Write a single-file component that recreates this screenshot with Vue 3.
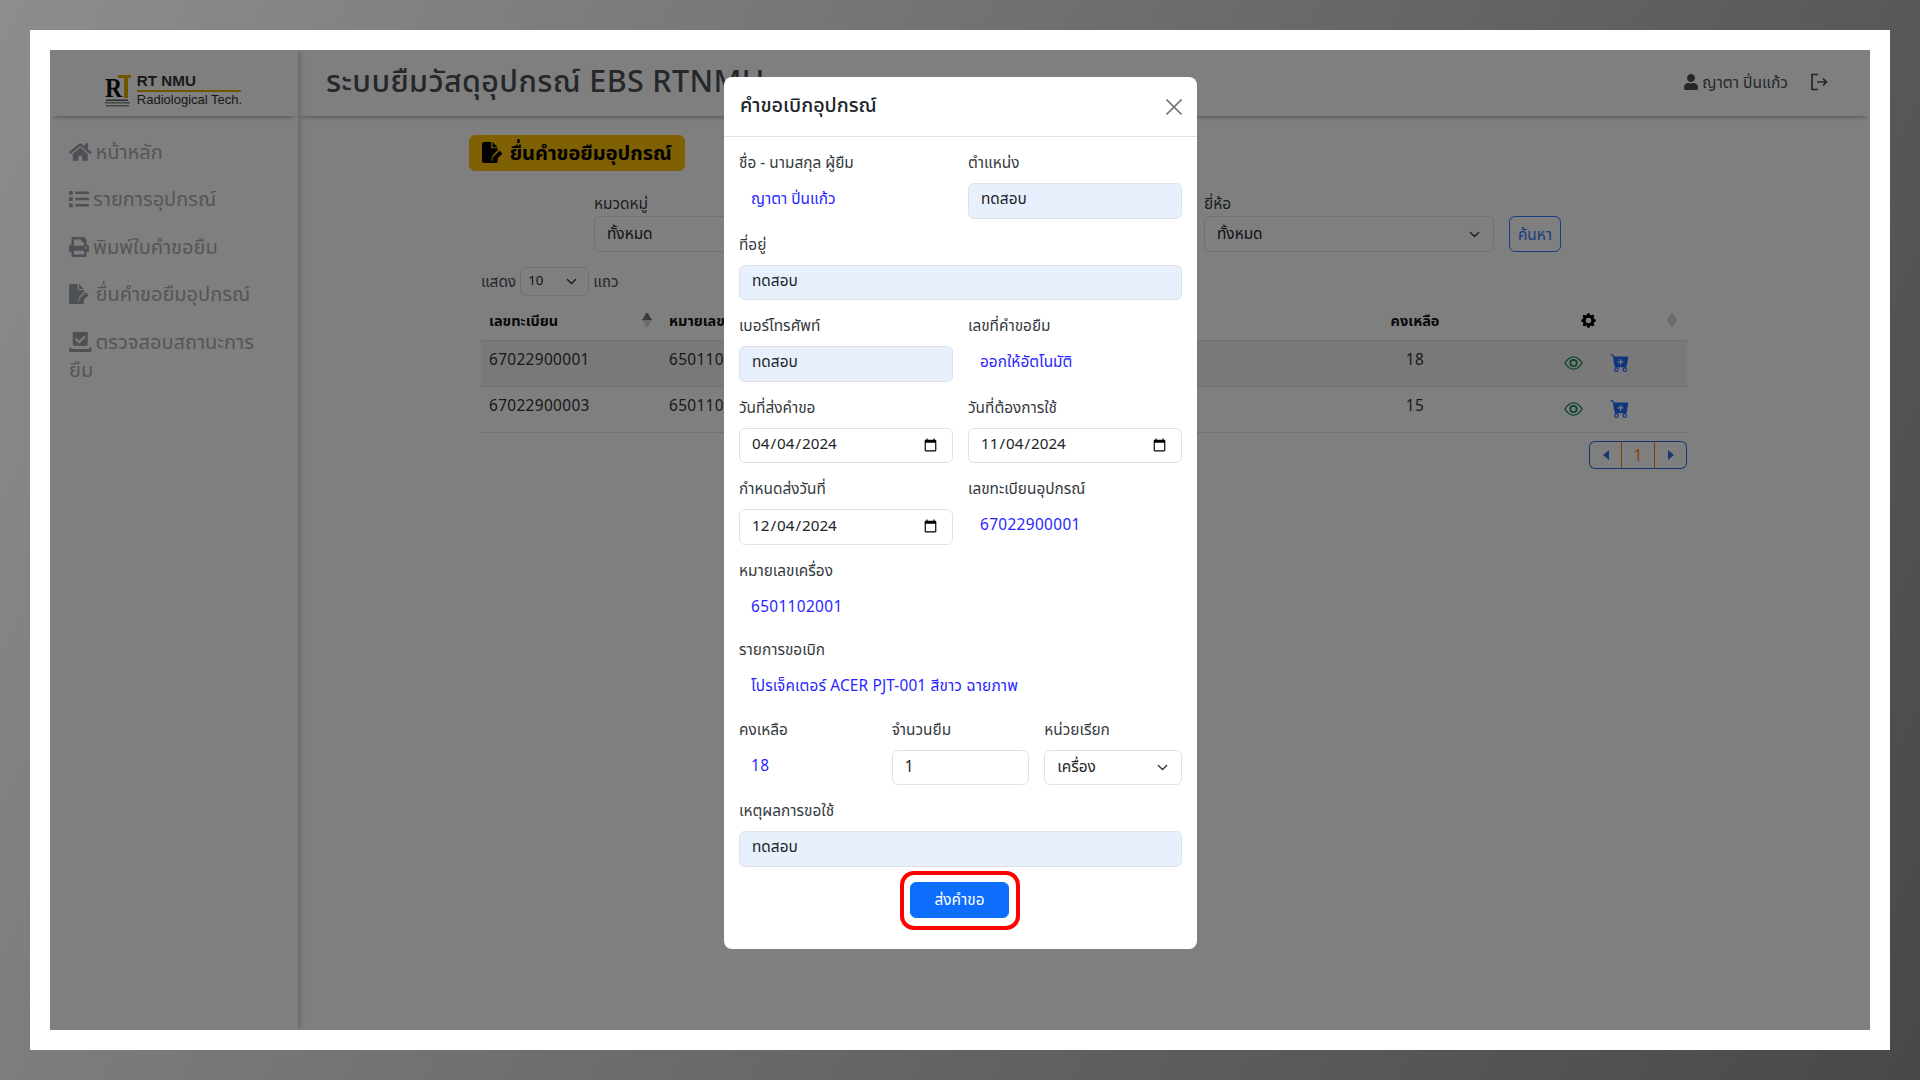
<script setup>
const navItems = [
  { key: "home", label: "หน้าหลัก", view: "0 0 576 512", d: "M280.37 148.26L96 300.11V464a16 16 0 0 0 16 16l112.06-.29a16 16 0 0 0 15.92-16V368a16 16 0 0 1 16-16h64a16 16 0 0 1 16 16v95.64a16 16 0 0 0 16 16.05L464 480a16 16 0 0 0 16-16V300L295.67 148.26a12.19 12.19 0 0 0-15.3 0zM571.6 251.47L488 182.56V44.05a12 12 0 0 0-12-12h-56a12 12 0 0 0-12 12v72.61L318.47 43a48 48 0 0 0-61 0L4.34 251.47a12 12 0 0 0-1.6 16.9l25.5 31A12 12 0 0 0 45.15 301l235.22-193.74a12.19 12.19 0 0 1 15.3 0L530.9 301a12 12 0 0 0 16.9-1.6l25.5-31a12 12 0 0 0-1.7-16.93z" },
  { key: "list", label: "รายการอุปกรณ์", view: "0 0 512 512", d: "M80 368H16a16 16 0 0 0-16 16v64a16 16 0 0 0 16 16h64a16 16 0 0 0 16-16v-64a16 16 0 0 0-16-16zm0-320H16A16 16 0 0 0 0 64v64a16 16 0 0 0 16 16h64a16 16 0 0 0 16-16V64a16 16 0 0 0-16-16zm0 160H16a16 16 0 0 0-16 16v64a16 16 0 0 0 16 16h64a16 16 0 0 0 16-16v-64a16 16 0 0 0-16-16zm416 176H176a16 16 0 0 0-16 16v32a16 16 0 0 0 16 16h320a16 16 0 0 0 16-16v-32a16 16 0 0 0-16-16zm0-320H176a16 16 0 0 0-16 16v32a16 16 0 0 0 16 16h320a16 16 0 0 0 16-16V80a16 16 0 0 0-16-16zm0 160H176a16 16 0 0 0-16 16v32a16 16 0 0 0 16 16h320a16 16 0 0 0 16-16v-32a16 16 0 0 0-16-16z" },
  { key: "print", label: "พิมพ์ใบคำขอยืม", view: "0 0 512 512", d: "M448 192V77.25c0-8.49-3.37-16.62-9.37-22.63L393.37 9.37c-6-6-14.14-9.37-22.63-9.37H96C78.33 0 64 14.33 64 32v160c-35.35 0-64 28.65-64 64v112c0 8.84 7.16 16 16 16h48v96c0 17.67 14.33 32 32 32h320c17.67 0 32-14.33 32-32v-96h48c8.84 0 16-7.16 16-16V256c0-35.35-28.65-64-64-64zm-64 256H128v-96h256v96zm0-224H128V64h192v48c0 8.84 7.16 16 16 16h48v96zm48 72c-13.25 0-24-10.75-24-24 0-13.26 10.75-24 24-24s24 10.74 24 24c0 13.25-10.75 24-24 24z" },
  { key: "file", label: "ยื่นคำขอยืมอุปกรณ์", view: "0 0 576 512", d: "M0 48A48 48 0 0 1 48 0h176v128a24 24 0 0 0 24 24h136v50L262 324l-34 112a20 20 0 0 0 26 24l80-24 50-50v78a48 48 0 0 1-48 48H48a48 48 0 0 1-48-48zM256 0l128 128H256zM428 214l72 72-170 150-84 22 22-84z" },
  { key: "check", label: "ตรวจสอบสถานะการยืม", view: "0 0 576 512", d: "M96 0a48 48 0 0 1 48-48h288a48 48 0 0 1 48 48v304a48 48 0 0 1-48 48H144a48 48 0 0 1-48-48zM392 90l-134 134-70-70-36 36 106 106 170-170zM0 400h64v32h448v-32h64v64a48 48 0 0 1-48 48H48a48 48 0 0 1-48-48z" }
];

const rows = [
  { code: "67022900001", machine: "6501102001", left: 18 },
  { code: "67022900003", machine: "6501102003", left: 15 }
];

const cartPath = "M.5 1a.5.5 0 0 0 0 1h1.11l.401 1.607 1.498 7.985A.5.5 0 0 0 4 12h1a2 2 0 1 0 0 4 2 2 0 0 0 0-4h7a2 2 0 1 0 0 4 2 2 0 0 0 0-4h1a.5.5 0 0 0 .491-.408l1.5-8A.5.5 0 0 0 14.5 3H2.89l-.405-1.621A.5.5 0 0 0 2 1H.5zM6 14a1 1 0 1 1-2 0 1 1 0 0 1 2 0zm7 0a1 1 0 1 1-2 0 1 1 0 0 1 2 0zM9 5.5V7h1.5a.5.5 0 0 1 0 1H9v1.5a.5.5 0 0 1-1 0V8H6.5a.5.5 0 0 1 0-1H8V5.5a.5.5 0 0 1 1 0z";
</script>

<template>
  <div class="screen">
    <div class="frame">
      <div class="app">
        <aside class="sidebar">
          <div class="brand">
            <svg class="brand__mark" viewBox="0 0 26 34">
              <rect x="13" y="1" width="13" height="3" fill="#e0a800" />
              <rect x="19" y="1" width="4" height="23" fill="#e0a800" />
              <text transform="translate(0 23) scale(0.85 1)" font-family="Liberation Serif, serif" font-size="28" font-weight="700" fill="#111">R</text>
              <rect x="1" y="25.500" width="22" height="1.500" fill="#555" />
              <rect x="0" y="28" width="25" height="1.500" fill="#888" />
              <rect x="1" y="31" width="23" height="1.500" fill="#888" />
            </svg>
            <div class="brand__text">
              <div class="brand__name">RT NMU</div>
              <div class="brand__sub">Radiological Tech.</div>
            </div>
          </div>
          <nav class="nav">
            <a v-for="item in navItems" :key="item.key" class="nav__item">
              <svg class="nav__icon" :viewBox="item.view" fill="currentColor"><path :d="item.d" /></svg>{{ item.label }}
            </a>
          </nav>
        </aside>

        <main class="main">
          <header class="topbar">
            <h1 class="topbar__title">ระบบยืมวัสดุอุปกรณ์ EBS RTNMU</h1>
            <div class="topbar__user">
              <svg class="topbar__avatar" viewBox="0 0 448 512" fill="currentColor">
                <path d="M224 256c70.7 0 128-57.3 128-128S294.7 0 224 0 96 57.3 96 128s57.3 128 128 128zm89.6 32h-16.7c-22.2 10.2-46.9 16-72.9 16s-50.6-5.8-72.9-16h-16.7C60.2 288 0 348.2 0 422.4V464c0 26.5 21.5 48 48 48h352c26.5 0 48-21.5 48-48v-41.6c0-74.2-60.2-134.4-134.4-134.4z" />
              </svg>
              <span>ญาตา ปิ่นแก้ว</span>
              <svg class="topbar__logout" viewBox="0 0 18 18" fill="none" stroke="currentColor" stroke-width="1.7">
                <path d="M8 1.500H2v15h6M7 9h9.500M13 5.500 16.500 9 13 12.500" />
              </svg>
            </div>
          </header>

          <section class="content">
            <button class="request-btn" type="button">
              <svg class="request-btn__icon" viewBox="0 0 576 512" fill="currentColor"><path :d="navItems[3].d" /></svg>
              ยื่นคำขอยืมอุปกรณ์
            </button>

            <div class="filters">
              <div class="filters__field">
                <label>หมวดหมู่</label>
                <select class="select"><option>ทั้งหมด</option></select>
              </div>
              <div class="filters__field">
                <label>&nbsp;</label>
                <select class="select"></select>
              </div>
              <div class="filters__field">
                <label>ยี่ห้อ</label>
                <select class="select"><option>ทั้งหมด</option></select>
              </div>
              <button class="search-btn" type="button">ค้นหา</button>
            </div>

            <div class="length">
              <span>แสดง</span>
              <select class="select select--small"><option>10</option></select>
              <span>แถว</span>
            </div>

            <table class="table">
              <colgroup>
                <col style="width: 180px" />
                <col style="width: 150px" />
                <col />
                <col style="width: 150px" />
                <col style="width: 197px" />
              </colgroup>
              <thead>
                <tr>
                  <th class="sortable">เลขทะเบียน<span class="sort sort--asc"></span></th>
                  <th>หมายเลขเครื่อง</th>
                  <th></th>
                  <th class="center">คงเหลือ</th>
                  <th class="center sortable">
                    <svg class="gear" viewBox="0 0 16 16" fill="currentColor">
                      <path d="M9.405 1.05c-.413-1.4-2.397-1.4-2.81 0l-.1.34a1.464 1.464 0 0 1-2.105.872l-.31-.17c-1.283-.698-2.686.705-1.987 1.987l.169.311c.446.82.023 1.841-.872 2.105l-.34.1c-1.4.413-1.4 2.397 0 2.81l.34.1a1.464 1.464 0 0 1 .872 2.105l-.17.31c-.698 1.283.705 2.686 1.987 1.987l.311-.169a1.464 1.464 0 0 1 2.105.872l.1.34c.413 1.4 2.397 1.4 2.81 0l.1-.34a1.464 1.464 0 0 1 2.105-.872l.31.17c1.283.698 2.686-.705 1.987-1.987l-.169-.311a1.464 1.464 0 0 1 .872-2.105l.34-.1c1.4-.413 1.4-2.397 0-2.81l-.34-.1a1.464 1.464 0 0 1-.872-2.105l.17-.31c.698-1.283-.705-2.686-1.987-1.987l-.311.169a1.464 1.464 0 0 1-2.105-.872l-.1-.34zM8 10.93a2.929 2.929 0 1 1 0-5.86 2.929 2.929 0 0 1 0 5.858z" />
                    </svg>
                    <span class="sort"></span>
                  </th>
                </tr>
              </thead>
              <tbody>
                <tr v-for="row in rows" :key="row.code">
                  <td class="num">{{ row.code }}</td>
                  <td class="num">{{ row.machine }}</td>
                  <td></td>
                  <td class="center num">{{ row.left }}</td>
                  <td class="actions">
                    <svg class="eye" viewBox="0 0 20 16" fill="none" stroke="currentColor" stroke-width="1.4">
                      <path d="M1 8c2.500-4.300 5.500-6.500 9-6.500S16.500 3.700 19 8c-2.500 4.300-5.500 6.500-9 6.500S3.500 12.300 1 8z" />
                      <circle cx="10" cy="8" r="3.400" stroke-width="1.800" />
                    </svg>
                    <svg class="cart" viewBox="0 0 16 16" fill="currentColor"><path :d="cartPath" /></svg>
                  </td>
                </tr>
              </tbody>
            </table>

            <div class="pager">
              <span class="pager__cell pager__cell--arrow"><i class="tri tri--left"></i></span>
              <span class="pager__cell pager__cell--page">1</span>
              <span class="pager__cell pager__cell--arrow"><i class="tri tri--right"></i></span>
            </div>
          </section>
        </main>

        <div class="backdrop"></div>

        <div class="modal" role="dialog" aria-modal="true">
          <div class="modal__header">
            <h2 class="modal__title">คำขอเบิกอุปกรณ์</h2>
            <svg class="modal__close" viewBox="0 0 16 16" fill="none" stroke="currentColor" stroke-width="1.600">
              <path d="M.5.500l15 15M15.500.500l-15 15" />
            </svg>
          </div>

          <form class="modal__body" @submit.prevent>
            <div class="row row--2">
              <div class="field">
                <label>ชื่อ - นามสกุล ผู้ยืม</label>
                <div class="value">ญาตา ปิ่นแก้ว</div>
              </div>
              <div class="field">
                <label>ตำแหน่ง</label>
                <input class="input input--filled" value="ทดสอบ" />
              </div>
            </div>
            <div class="field">
              <label>ที่อยู่</label>
              <input class="input input--filled" value="ทดสอบ" />
            </div>
            <div class="row row--2">
              <div class="field">
                <label>เบอร์โทรศัพท์</label>
                <input class="input input--filled" value="ทดสอบ" />
              </div>
              <div class="field">
                <label>เลขที่คำขอยืม</label>
                <div class="value">ออกให้อัตโนมัติ</div>
              </div>
            </div>
            <div class="row row--2">
              <div class="field">
                <label>วันที่ส่งคำขอ</label>
                <input class="input input--date" type="date" value="2024-04-04" />
              </div>
              <div class="field">
                <label>วันที่ต้องการใช้</label>
                <input class="input input--date" type="date" value="2024-11-04" />
              </div>
            </div>
            <div class="row row--2">
              <div class="field">
                <label>กำหนดส่งวันที่</label>
                <input class="input input--date" type="date" value="2024-12-04" />
              </div>
              <div class="field">
                <label>เลขทะเบียนอุปกรณ์</label>
                <div class="value num">67022900001</div>
              </div>
            </div>
            <div class="field field--static">
              <label>หมายเลขเครื่อง</label>
              <div class="value num">6501102001</div>
            </div>
            <div class="field field--static">
              <label>รายการขอเบิก</label>
              <div class="value value--wide">โปรเจ็คเตอร์ ACER PJT-001 สีขาว ฉายภาพ</div>
            </div>
            <div class="row row--3">
              <div class="field">
                <label>คงเหลือ</label>
                <div class="value num">18</div>
              </div>
              <div class="field">
                <label>จำนวนยืม</label>
                <input class="input" value="1" />
              </div>
              <div class="field">
                <label>หน่วยเรียก</label>
                <select class="select select--modal"><option>เครื่อง</option></select>
              </div>
            </div>
            <div class="field">
              <label>เหตุผลการขอใช้</label>
              <input class="input input--filled" value="ทดสอบ" />
            </div>
            <div class="modal__actions">
              <span class="highlight">
                <button class="submit-btn" type="submit">ส่งคำขอ</button>
              </span>
            </div>
          </form>
        </div>
      </div>
    </div>
  </div>
</template>

<style>
html,
body {
  margin: 0;
  background: #666;
}
</style>

<style scoped>
.screen {
  box-sizing: border-box;
  width: 1920px;
  height: 1080px;
  padding: 30px;
  overflow: hidden;
  background: linear-gradient(118deg, #8d8d8d 0%, #484848 100%);
  font-family: "Noto Sans", "Noto Sans Thai", sans-serif;
  font-size: 15.4px;
  line-height: 23px;
  color: #212529;
}

.num {
  letter-spacing: 0.35px;
}

.frame {
  box-sizing: border-box;
  width: 1860px;
  height: 1020px;
  padding: 20px;
  background: #fff;
}

.app {
  position: relative;
  display: grid;
  grid-template-columns: 248px minmax(0, 1fr);
  height: 980px;
  overflow: hidden;
  background: #fff;
}

/* sidebar */
.sidebar {
  box-shadow: 2px 0 5px rgba(0, 0, 0, 0.2);
}

.brand {
  display: flex;
  align-items: flex-start;
  justify-content: center;
  gap: 6px;
  box-sizing: border-box;
  height: 66px;
  padding: 21px 1px 0 0;
  box-shadow: 0 5px 5px -4px rgba(0, 0, 0, 0.35);
}

.brand__mark {
  width: 26px;
  height: 34px;
  margin-top: 3px;
  overflow: visible;
}

.brand__name {
  box-sizing: border-box;
  width: 104px;
  height: 21px;
  border-bottom: 2px solid #e0a800;
  color: #333;
  font-family: "Liberation Sans", sans-serif;
  font-size: 15.2px;
  font-weight: 700;
  line-height: 19px;
}

.brand__sub {
  color: #333;
  font-family: "Liberation Sans", sans-serif;
  font-size: 13px;
  line-height: 16px;
  white-space: nowrap;
}

.nav {
  display: flex;
  flex-direction: column;
  gap: 19.400px;
  padding: 22px 36px 0 19px;
}

.nav__item {
  color: #a8adb3;
  font-size: 20px;
  line-height: 28px;
}

.nav__icon {
  height: 20px;
  margin-right: 4px;
  color: #9aa0a8;
  vertical-align: -3px;
}

/* main column */
.topbar {
  display: flex;
  align-items: center;
  justify-content: space-between;
  height: 66px;
  padding: 0 42px 0 28px;
  box-shadow: 0 5px 5px -4px rgba(0, 0, 0, 0.35);
}

.topbar__title {
  margin: 0 0 4px;
  color: #495057;
  font-size: 30.4px;
  font-weight: 500;
  letter-spacing: 0.4px;
  line-height: 36px;
  white-space: nowrap;
}

.topbar__user {
  display: flex;
  align-items: center;
  margin-bottom: 2px;
  color: #495057;
  font-size: 15.6px;
}

.topbar__avatar {
  width: 14px;
  height: 16px;
  margin-right: 4px;
}

.topbar__logout {
  width: 18px;
  height: 18px;
  margin-left: 22px;
}

.content {
  padding: 19px 183px 0 171px;
}

.request-btn {
  display: inline-flex;
  align-items: center;
  gap: 4px;
  height: 36px;
  padding: 0 12px 2px;
  border: 1px solid #ffc107;
  border-radius: 6px;
  background: #ffc107;
  color: #000;
  font: inherit;
  font-size: 20px;
  font-weight: 700;
}

.request-btn__icon {
  height: 21px;
}

.filters {
  display: grid;
  grid-template-columns: 290px 290px 290px 52px;
  align-items: end;
  gap: 15px;
  margin-top: 21px;
  padding-left: 125px;
}

.filters__field label {
  display: block;
  margin-bottom: 1px;
  color: #343a40;
}

.select {
  box-sizing: border-box;
  width: 100%;
  height: 36px;
  padding: 0 30px 2px 12px;
  border: 1px solid #dee2e6;
  border-radius: 6px;
  background: #fff url("data:image/svg+xml,%3csvg xmlns='http://www.w3.org/2000/svg' viewBox='0 0 16 16'%3e%3cpath fill='none' stroke='%23343a40' stroke-linecap='round' stroke-linejoin='round' stroke-width='2' d='m2 5 6 6 6-6'/%3e%3c/svg%3e") no-repeat right 11px center / 15px 11px;
  color: #212529;
  font: inherit;
  appearance: none;
}

.select--small {
  width: 69px;
  height: 29px;
  padding-left: 7px;
  font-size: 13.300px;
  background-position: right 9px center;
}

.search-btn {
  height: 36px;
  padding: 0;
  border: 1.500px solid #2f7bff;
  border-radius: 6px;
  background: transparent;
  color: #2f7bff;
  font: inherit;
}

.length {
  display: flex;
  align-items: center;
  gap: 4px;
  height: 29px;
  margin: 15px 0 0 12px;
  color: #495057;
}

.table {
  width: calc(100% - 12px);
  margin-left: 12px;
  margin-top: 2px;
  border-collapse: collapse;
  table-layout: fixed;
}

.table th {
  position: relative;
  height: 40px;
  padding: 2px 8px 0;
  border-bottom: 1px solid #dee2e6;
  color: #111;
  font-size: 14.5px;
  font-weight: 700;
  text-align: left;
  white-space: nowrap;
  overflow: hidden;
}

.table td {
  height: 37px;
  padding: 0 8px 8px;
  border-bottom: 1px solid #dee2e6;
  color: #333;
}

.table tbody tr:nth-child(odd) td {
  background: rgba(0, 0, 0, 0.05);
}

.table th.center,
.table td.center {
  text-align: center;
}

.sort {
  position: absolute;
  top: 14px;
  right: 10px;
  width: 10px;
  height: 16px;
  background:
    linear-gradient(to top right, transparent 50%, #d7d7d7 50%) 0 8px / 5px 8px no-repeat,
    linear-gradient(to top left, transparent 50%, #d7d7d7 50%) 5px 8px / 5px 8px no-repeat,
    linear-gradient(to bottom right, transparent 50%, #d7d7d7 50%) 0 0 / 5px 8px no-repeat,
    linear-gradient(to bottom left, transparent 50%, #d7d7d7 50%) 5px 0 / 5px 8px no-repeat;
}

.sort--asc {
  right: 9px;
  background:
    linear-gradient(to top right, transparent 50%, #d7d7d7 50%) 0 8px / 5px 8px no-repeat,
    linear-gradient(to top left, transparent 50%, #d7d7d7 50%) 5px 8px / 5px 8px no-repeat,
    linear-gradient(to bottom right, transparent 50%, #777 50%) 0 0 / 5px 8px no-repeat,
    linear-gradient(to bottom left, transparent 50%, #777 50%) 5px 0 / 5px 8px no-repeat;
}

.gear {
  display: block;
  width: 15px;
  height: 15px;
  margin: 0 auto;
  color: #000;
}

.table td.actions {
  height: 41px;
  padding: 0 0 4px;
  white-space: nowrap;
  vertical-align: middle;
}

.eye {
  width: 19px;
  height: 16px;
  margin-left: 74px;
  vertical-align: middle;
  color: #198754;
}

.cart {
  width: 20px;
  height: 19px;
  margin-left: 27px;
  vertical-align: middle;
  color: #1f6bff;
}

.pager {
  display: flex;
  justify-content: flex-end;
  margin-top: 8px;
  height: 28px;
}

.pager__cell {
  display: flex;
  align-items: center;
  justify-content: center;
  box-sizing: border-box;
  border: 1px solid #2f6fe0;
}

.pager__cell--arrow {
  width: 32px;
}

.pager__cell:first-child {
  border-right: 0;
  border-radius: 6px 0 0 6px;
}

.pager__cell:last-child {
  border-left: 0;
  border-radius: 0 6px 6px 0;
}

.pager__cell--page {
  width: 34px;
  border-left: 1px solid #fd7e14;
  border-right: 1px solid #fd7e14;
  color: #fd7e14;
}

.tri {
  width: 0;
  height: 0;
  border-top: 5.500px solid transparent;
  border-bottom: 5.500px solid transparent;
}

.tri--left {
  border-right: 6px solid #2f6fe0;
}

.tri--right {
  border-left: 6px solid #2f6fe0;
}

/* modal */
.backdrop {
  position: absolute;
  inset: 0;
  background: rgba(0, 0, 0, 0.5);
}

.modal {
  position: absolute;
  top: 27px;
  left: 674px;
  width: 473px;
  height: 872px;
  border-radius: 8px;
  background: #fff;
}

.modal__header {
  display: flex;
  align-items: center;
  justify-content: space-between;
  box-sizing: border-box;
  height: 60px;
  padding: 0 15px 0 16px;
  border-bottom: 1px solid #dee2e6;
}

.modal__title {
  margin: 0 0 3px;
  font-size: 19.8px;
  font-weight: 500;
  line-height: 28px;
}

.modal__close {
  width: 16px;
  height: 16px;
  color: #777;
}

.modal__body {
  display: flex;
  flex-direction: column;
  gap: 14px;
  padding: 14px 15px 0;
}

.row {
  display: grid;
  gap: 15px;
}

.row--2 {
  grid-template-columns: repeat(2, minmax(0, 1fr));
}

.row--3 {
  grid-template-columns: repeat(3, minmax(0, 1fr));
}

.field label {
  display: block;
  margin-bottom: 9px;
  color: #343a40;
}

.field--static .value {
  height: 33.500px;
}

.value {
  box-sizing: border-box;
  height: 35.500px;
  padding: 4px 12px 0;
  color: #2a1fff;
}

.value--wide {
  letter-spacing: 0.15px;
}

.input {
  display: block;
  box-sizing: border-box;
  width: 100%;
  height: 35.500px;
  padding: 0 12px 2px;
  border: 1px solid #dee2e6;
  border-radius: 6px;
  background: #fff;
  color: #212529;
  font: inherit;
  outline: none;
}

.input--date {
  padding: 0 12px 0 11px;
  font-size: 15.200px;
}

.input--date::-webkit-datetime-edit {
  margin-top: -3px;
}

.input--filled {
  background: #e8f0fe;
}

.select--modal {
  height: 35.500px;
}

.modal__actions {
  display: flex;
  justify-content: center;
  margin-top: -10px;
  padding-right: 2px;
}

.highlight {
  display: inline-flex;
  box-sizing: border-box;
  width: 120px;
  height: 59px;
  align-items: center;
  justify-content: center;
  border: 4px solid #f00;
  border-radius: 14px;
}

.submit-btn {
  width: 99px;
  height: 36px;
  padding-bottom: 2px;
  border: 1px solid #0d6efd;
  border-radius: 6px;
  background: #0d6efd;
  color: #fff;
  font: inherit;
}
</style>
